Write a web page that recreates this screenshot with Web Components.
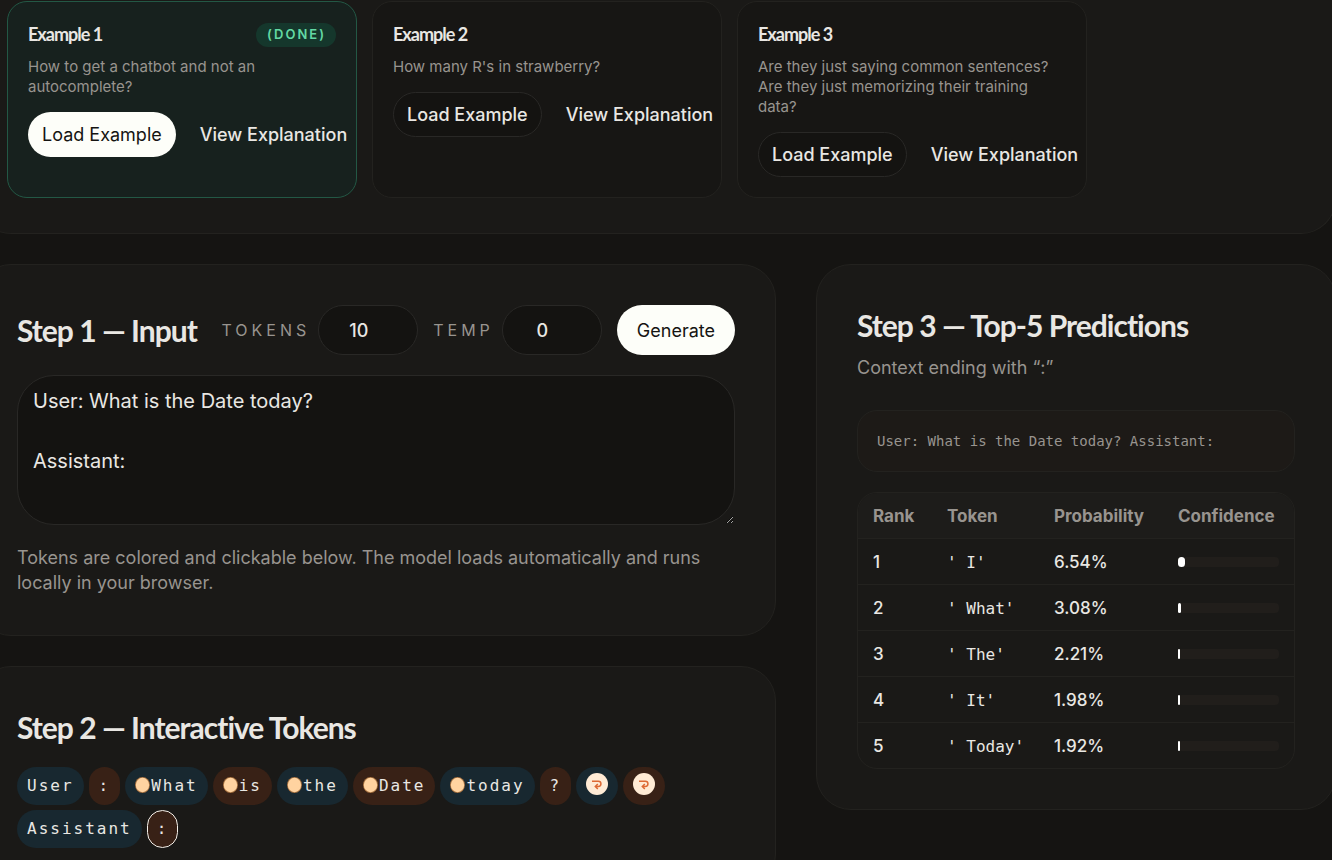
<!DOCTYPE html>
<html lang="en">
<head>
<meta charset="utf-8">
<title>Next-token playground</title>
<style>
  :root {
    --bg: #151412;
    --panel: #1a1917;
    --card: #171614;
    --line: #23221f;
    --line-strong: #292826;
    --text: #e9e7e3;
    --muted: #98948f;
    --light: #fdfef9;
    --display: Lato, "Open Sans", sans-serif;
    --body: Inter, "Liberation Sans", sans-serif;
    --mono: "DejaVu Sans Mono", "Liberation Mono", monospace;
  }
  html { overflow: hidden; background: var(--bg); }
  body { margin: 0; background: var(--bg); color: var(--text); font: 18px/25px var(--body); }
</style>
</head>
<body>
<playground-app></playground-app>

<template id="t-app">
  <style>
    :host { display: block; margin: 0 -4px 0 -24px; }
    .examples { display: grid; grid-template-columns: repeat(3, 350px); gap: 15px; }
    .columns { display: grid; grid-template-columns: minmax(0, 20fr) minmax(0, 13fr); gap: 40px; margin-top: 30px; align-items: start; }
    .stack { display: grid; gap: 30px; }
    .hint { margin: 20px 0 0; color: var(--muted); }
  </style>
  <ui-panel class="hero" flush>
    <div class="examples">
      <example-card done>
        <span slot="title">Example 1</span>
        How to get a chatbot and not an autocomplete?
      </example-card>
      <example-card>
        <span slot="title">Example 2</span>
        How many R's in strawberry?
      </example-card>
      <example-card>
        <span slot="title">Example 3</span>
        Are they just saying common sentences? Are they just memorizing their training data?
      </example-card>
    </div>
  </ui-panel>
  <div class="columns">
    <div class="stack">
      <ui-panel>
        <prompt-form></prompt-form>
        <p class="hint">Tokens are colored and clickable below. The model loads automatically and runs locally in your browser.</p>
      </ui-panel>
      <ui-panel>
        <panel-title>Step 2 — Interactive Tokens</panel-title>
        <token-list></token-list>
      </ui-panel>
    </div>
    <ui-panel>
      <panel-title>Step 3 — Top‑5 Predictions</panel-title>
      <prediction-table></prediction-table>
    </ui-panel>
  </div>
</template>

<template id="t-panel">
  <style>
    :host { display: block; box-sizing: border-box; padding: 40px; border: 1px solid var(--line); border-radius: 35px; background: var(--panel); }
    :host([flush]) { padding: 1px 30px 35px; border-top: 0; border-radius: 0 0 35px 35px; }
  </style>
  <slot></slot>
</template>

<template id="t-title">
  <style>
    :host { display: block; }
    h2 { margin: 0; font: 700 30px/40px var(--display); letter-spacing: -1px; white-space: nowrap; }
  </style>
  <h2><slot></slot></h2>
</template>

<template id="t-button">
  <style>
    :host { display: flex; }
    button { box-sizing: border-box; min-height: 45px; padding: 0 13px; border: 1px solid transparent; border-radius: 25px; background: transparent; color: var(--text); font: 500 18px/25px var(--body); white-space: nowrap; cursor: pointer; }
    :host([kind="primary"]) button { background: var(--light); color: #151412; font-weight: 400; }
    :host([kind="outline"]) button { border-color: var(--line-strong); background: #141311; }
    :host([large]) button { min-height: 50px; padding: 0 19px; }
  </style>
  <button type="button"><slot></slot></button>
</template>

<template id="t-card">
  <style>
    :host { display: block; box-sizing: border-box; padding: 20px; border: 1px solid var(--line); border-radius: 20px; background: var(--card); }
    :host([done]) { border-color: #235845; background: #17211e; }
    header { display: flex; align-items: center; justify-content: space-between; height: 25px; }
    h3 { margin: 0; font: 700 18px/25px var(--display); letter-spacing: -1px; }
    .badge { display: none; padding: 0 10px 2px 11px; border-radius: 12px; background: #15372c; color: #63d9a4; font: 600 13px/22px var(--body); letter-spacing: 2px; }
    :host([done]) .badge { display: block; }
    p { margin: 10px 0 15px; color: var(--muted); font-size: 15px; line-height: 20px; }
    .actions { display: flex; gap: 10px; }
  </style>
  <header><h3><slot name="title"></slot></h3><span class="badge">(DONE)</span></header>
  <p><slot></slot></p>
  <div class="actions">
    <ui-button class="load" kind="outline">Load Example</ui-button>
    <ui-button>View Explanation</ui-button>
  </div>
</template>

<template id="t-form">
  <style>
    :host { display: block; }
    header { display: flex; align-items: center; justify-content: space-between; }
    .controls, .field { display: flex; align-items: center; }
    .controls { gap: 15px; }
    .field { gap: 8px; }
    label { color: var(--muted); font-size: 16px; letter-spacing: 4px; }
    input, textarea { box-sizing: border-box; border: 1px solid var(--line-strong); background: #141311; color: var(--text); outline: 0; }
    input { width: 100px; height: 50px; padding: 0 24px 0 20px; border-radius: 25px; font: 500 18px/25px var(--body); text-align: center; }
    textarea { display: block; width: 100%; height: 150px; margin-top: 20px; padding: 10px 15px; border-radius: 37px; font: 400 20px/30px var(--body); resize: vertical; }
  </style>
  <header>
    <panel-title>Step 1 — Input</panel-title>
    <div class="controls">
      <div class="field"><label for="tokens">TOKENS</label><input id="tokens" type="number" value="10"></div>
      <div class="field"><label for="temp">TEMP</label><input id="temp" type="number" value="0"></div>
      <ui-button kind="primary" large>Generate</ui-button>
    </div>
  </header>
  <textarea aria-label="Prompt" spellcheck="false">User: What is the Date today?

Assistant:</textarea>
</template>

<template id="t-chip">
  <style>
    :host { display: block; }
    button { display: flex; align-items: center; box-sizing: border-box; height: 38px; padding: 0 9px 2px; border: 1px solid transparent; border-radius: 19px; background: #182830; color: var(--text); font: 16px/25px var(--mono); letter-spacing: 2px; cursor: pointer; }
    :host([tone="warm"]) button { background: #382116; }
    :host([selected]) button { border-color: #f4f0ea; }
    .space { width: 16px; height: 16px; flex: none; }
    .newline { width: 22px; height: 22px; margin-bottom: 2px; flex: none; }
  </style>
  <button type="button"></button>
</template>

<template id="t-tokens">
  <style>
    :host { display: flex; flex-wrap: wrap; gap: 5px; margin-top: 20px; }
  </style>
</template>

<template id="t-table">
  <style>
    :host { display: block; }
    .context { margin: 10px 0 30px; color: var(--muted); }
    .preview { padding: 18px 19px; border: 1px solid var(--line); border-radius: 20px; background: #1d1a17; color: var(--muted); font: 14px/24px var(--mono); }
    .frame { margin-top: 20px; border: 1px solid var(--line); border-radius: 20px; overflow: hidden; }
    table { width: 100%; border-collapse: separate; border-spacing: 0; table-layout: fixed; font-size: 17px; }
    th, td { box-sizing: border-box; height: 46px; padding: 1px 15px 0; border-bottom: 1px solid var(--line); text-align: left; }
    tbody tr:last-child td { border-bottom: 0; height: 45px; }
    th { background: #1d1c1a; color: var(--muted); font-weight: 700; }
    td { font-weight: 500; }
    td.token { font: 400 16px/25px var(--mono); white-space: pre; }
    .rank { width: 74px; } .tok { width: 107px; } .prob { width: 124px; } .conf { width: 131px; }
    .track { height: 10px; border-radius: 4px; background: #211e1b; }
    .fill { height: 10px; border-radius: 4px; background: #fff; }
  </style>
  <p class="context">Context ending with “:”</p>
  <div class="preview">User: What is the Date today? Assistant:</div>
  <div class="frame">
    <table>
      <colgroup><col class="rank"><col class="tok"><col class="prob"><col class="conf"></colgroup>
      <thead><tr><th>Rank</th><th>Token</th><th>Probability</th><th>Confidence</th></tr></thead>
      <tbody></tbody>
    </table>
  </div>
</template>

<script>
  const stamp = (host, id) => {
    const root = host.attachShadow({ mode: 'open' });
    root.append(document.getElementById(id).content.cloneNode(true));
    return root;
  };
  const simple = (name, id) => customElements.define(name, class extends HTMLElement {
    constructor() { super(); stamp(this, id); }
  });

  simple('ui-panel', 't-panel');
  simple('panel-title', 't-title');
  simple('ui-button', 't-button');
  simple('prompt-form', 't-form');

  customElements.define('example-card', class extends HTMLElement {
    constructor() { super(); this.root = stamp(this, 't-card'); }
    connectedCallback() {
      if (this.hasAttribute('done')) this.root.querySelector('.load').setAttribute('kind', 'primary');
      else this.root.querySelector('.badge')?.remove();
    }
  });

  const SPACE = `<svg class="space" viewBox="0 0 16 16" aria-hidden="true">
    <ellipse cx="7.5" cy="8" rx="7.5" ry="8" fill="#a5703f"/><ellipse cx="7.5" cy="8" rx="6.7" ry="7.2" fill="#ffd3a0"/></svg>`;
  const NEWLINE = `<svg class="newline" viewBox="0 0 22 22" role="img" aria-label="new line">
    <circle cx="11" cy="11" r="11" fill="#ffebd5"/>
    <path d="M6 8.2H12.3a2.65 2.65 0 0 1 0 5.3H9.8M11.8 11L9.3 13.5L11.8 16" fill="none" stroke="#dd6a35" stroke-width="1.5"/></svg>`;

  customElements.define('token-chip', class extends HTMLElement {
    constructor() { super(); this.root = stamp(this, 't-chip'); }
    connectedCallback() {
      const value = this.getAttribute('value');
      const button = this.root.querySelector('button');
      button.replaceChildren();
      if (value === '\n') { button.innerHTML = NEWLINE; return; }
      if (value.startsWith(' ')) button.innerHTML = SPACE;
      const text = document.createElement('span');
      text.textContent = value.trim();
      button.append(text);
    }
  });

  customElements.define('token-list', class extends HTMLElement {
    constructor() {
      super();
      const root = stamp(this, 't-tokens');
      const tokens = ['User', ':', ' What', ' is', ' the', ' Date', ' today', '?', '\n', '\n', 'Assistant', ':'];
      tokens.forEach((value, i) => {
        const chip = document.createElement('token-chip');
        chip.setAttribute('value', value);
        chip.setAttribute('tone', i % 2 ? 'warm' : 'cool');
        if (i === tokens.length - 1) chip.setAttribute('selected', '');
        root.append(chip);
      });
    }
  });

  customElements.define('prediction-table', class extends HTMLElement {
    constructor() {
      super();
      const root = stamp(this, 't-table');
      const rows = [["' I'", 6.54], ["' What'", 3.08], ["' The'", 2.21], ["' It'", 1.98], ["' Today'", 1.92]];
      root.querySelector('tbody').innerHTML = rows.map(([token, p], i) =>
        `<tr><td>${i + 1}</td><td class="token">${token}</td><td>${p.toFixed(2)}%</td><td><div class="track"><div class="fill" style="width:${p}%"></div></div></td></tr>`).join('');
    }
  });

  simple('playground-app', 't-app');
</script>
</body>
</html>
